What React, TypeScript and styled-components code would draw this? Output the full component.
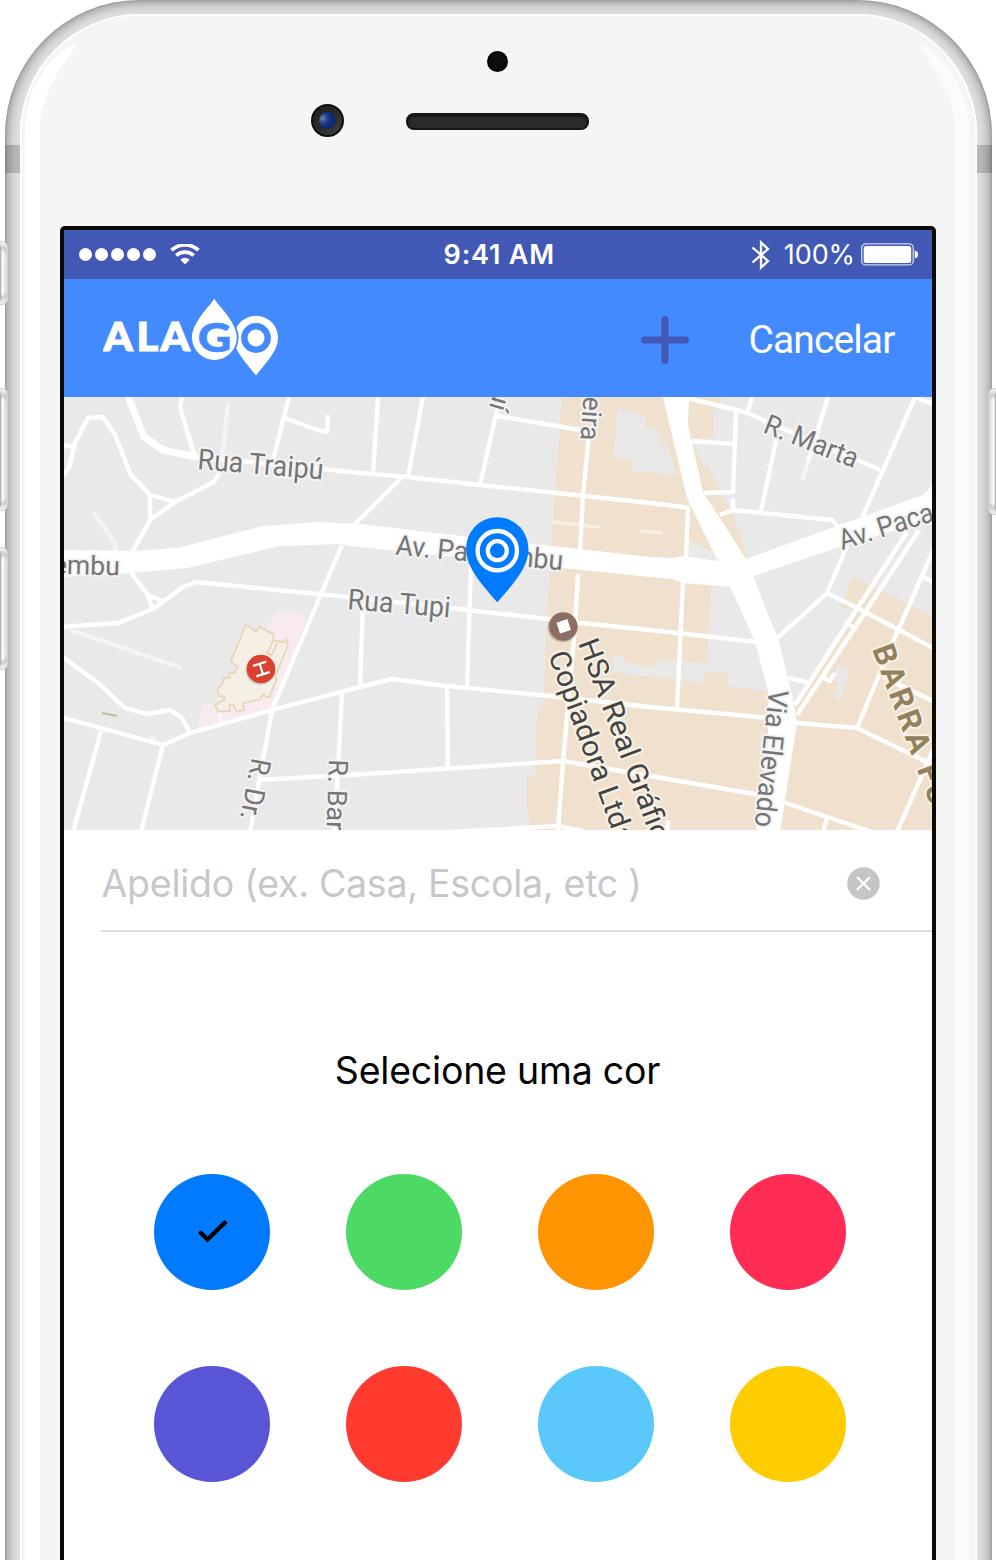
import React from "react";
import styled, { createGlobalStyle } from "styled-components";

const GlobalStyle = createGlobalStyle`
  *, *::before, *::after { box-sizing: border-box; }
  html, body { margin: 0; background: #fff; }
  body { overflow: hidden; }
`;

const SANS = `Inter, "Liberation Sans", sans-serif`;
const ROBOTO = `Roboto, "Liberation Sans", sans-serif`;
const INDIGO = "#4158b5";
const BLUE = "#448aff";

/* ---------- device ---------- */

const Stage = styled.div`
  position: relative;
  width: 996px;
  height: 1560px;
  overflow: hidden;
  background: #fff;
`;

const Shell = styled.div`
  position: relative;
  height: 1660px;
  margin: 0 4px 0 5px;
  padding: 14px 15px 0;
  border-radius: 135px 135px 0 0;
  background: #e0e0e0;
  box-shadow: inset 0 0 14px rgba(0, 0, 0, 0.52), inset 0 0 2px rgba(0, 0, 0, 0.22);
`;

const Face = styled.div`
  position: relative;
  height: 100%;
  padding-top: 37px;
  border-radius: 120px 120px 0 0;
  background: #f4f6f6;
  box-shadow: inset 0 0 0 1.5px #fff;
`;

const Glare = styled.svg`
  position: absolute;
  left: 0;
  top: 0;
  pointer-events: none;
`;

const AntennaBand = styled.div<{ $side: "left" | "right" }>`
  position: absolute;
  top: 145px;
  ${(p) => p.$side}: 0;
  width: 15px;
  height: 28px;
  background: rgba(0, 0, 0, 0.17);
`;

const SideButton = styled.div<{ $side: "left" | "right"; $top: number; $height: number }>`
  position: absolute;
  top: ${(p) => p.$top}px;
  ${(p) => p.$side}: ${(p) => (p.$side === "left" ? -13 : -12)}px;
  width: 16px;
  height: ${(p) => p.$height}px;
  border-radius: 6px;
  border: 1px solid #d2d2d2;
  background: linear-gradient(
    ${(p) => (p.$side === "left" ? "90deg" : "270deg")},
    #999 45%, #a8a8a8 52%, #fdfdfd 64%, #f2f2f2 78%, #cfcfcf 100%
  );
  box-shadow: inset 0 7px 4px -3px #f4f4f4, inset 0 -7px 4px -3px #f4f4f4,
    inset 0 12px 3px -4px rgba(150, 150, 150, 0.5), inset 0 -12px 3px -4px rgba(150, 150, 150, 0.5);
`;

const Sensor = styled.div`
  width: 21px;
  height: 21px;
  margin-left: 467px;
  border-radius: 50%;
  background: #0f0d0d;
  border: 2px solid #000;
`;

const EarpieceRow = styled.div`
  display: flex;
  align-items: center;
  gap: 62px;
  height: 33px;
  margin: 32px 0 0 291px;
`;

const Camera = styled.div`
  display: flex;
  align-items: center;
  justify-content: center;
  width: 33px;
  height: 33px;
  border-radius: 50%;
  border: 2px solid #0d0d0d;
  background: linear-gradient(135deg, #1c1c1c, #2a2a2a 50%, #444);
  &::after {
    content: "";
    width: 17px;
    height: 17px;
    border-radius: 50%;
    background: radial-gradient(circle at 22% 38%, #6d83b5 0, #2b4689 25%, #0b2c86 48%, #16255c 78%, #232a42 100%);
  }
`;

const Speaker = styled.div`
  width: 183px;
  height: 17px;
  margin-top: 2px;
  border-radius: 8px;
  border: 2px solid #141414;
  background: #2b2b2b;
  box-shadow: inset 0 2px 2px #151515;
`;

const Screen = styled.main`
  display: flex;
  flex-direction: column;
  width: 876px;
  height: 1420px;
  margin: 89px 0 0 39.5px;
  border: 4px solid #0b0a04;
  border-radius: 5px;
  background: #fff;
  overflow: hidden;
  position: relative;
`;

/* ---------- bars ---------- */

const StatusBar = styled.div`
  display: grid;
  grid-template-columns: 1fr auto 1fr;
  align-items: center;
  flex: none;
  height: 49px;
  padding: 0 13.5px 0 15px;
  background: ${INDIGO};
  color: #fff;
  font-family: ${SANS};
  font-size: 27px;
  line-height: 48px;
`;

const StatusGroup = styled.div<{ $end?: boolean }>`
  display: flex;
  align-items: center;
  justify-content: ${(p) => (p.$end ? "flex-end" : "flex-start")};
`;

const SignalDots = styled.div`
  display: flex;
  gap: 3.2px;
  margin-right: 13.4px;
`;

const Dot = styled.span`
  width: 13px;
  height: 13px;
  border-radius: 50%;
  background: #fff;
`;

const Clock = styled.span`
  margin-left: 2px;
  font-weight: 600;
  font-size: 27px;
  letter-spacing: 0.8px;
`;

const BatteryText = styled.span`
  margin: 0 6px 0 12.5px;
  font-size: 27px;
  letter-spacing: -0.1px;
`;

const AppBar = styled.header`
  display: flex;
  align-items: center;
  flex: none;
  height: 118px;
  padding: 0 37px 0 39px;
  background: ${BLUE};
`;

const AddButton = styled.button`
  display: flex;
  margin: 4px 60px 0 auto;
  padding: 0;
  border: 0;
  background: none;
`;

const CancelButton = styled.button`
  padding: 4px 0 0;
  border: 0;
  background: none;
  color: #fff;
  font-family: ${ROBOTO};
  font-size: 39px;
  letter-spacing: -0.9px;
  line-height: 46px;
`;

/* ---------- map ---------- */

const MapPane = styled.svg`
  display: block;
  flex: none;
  width: 868px;
  height: 433px;
  background: #e9e9e9;
`;

const Road = styled.path<{ $w?: number; $faint?: boolean }>`
  fill: none;
  stroke: #fff;
  stroke-width: ${(p) => p.$w ?? 4.4};
  stroke-linejoin: round;
  opacity: ${(p) => (p.$faint ? 0.5 : 1)};
`;

const MapLabel = styled.text<{ $tone?: "street" | "place" | "district"; $size?: number }>`
  font-family: ${ROBOTO};
  font-size: ${(p) => p.$size ?? 28}px;
  font-weight: ${(p) => (p.$tone === "district" ? 700 : 400)};
  fill: ${(p) => (p.$tone === "district" ? "#92815a" : p.$tone === "place" ? "#444" : "#757575")};
  stroke: ${(p) => (p.$tone === "district" || p.$tone === "place" ? "#f8f1e6" : "#f3f3f3")};
  stroke-width: 4px;
  stroke-linejoin: round;
  paint-order: stroke;
`;

/* ---------- form ---------- */

const NicknameRow = styled.div`
  display: flex;
  align-items: center;
  justify-content: space-between;
  flex: none;
  height: 102px;
  margin-left: 37px;
  padding: 6px 51.5px 0 1px;
  border-bottom: 2px solid #dcdcdd;
`;

const Placeholder = styled.span`
  padding-top: 2px;
  color: #c7c7cc;
  font-family: ${SANS};
  font-size: 37.5px;
  letter-spacing: -0.27px;
  line-height: 46px;
  white-space: nowrap;
`;

const Title = styled.h1`
  flex: none;
  margin: 115px 0 0;
  color: #030303;
  font-family: ${SANS};
  font-size: 37.5px;
  font-weight: 400;
  letter-spacing: -0.22px;
  line-height: 48px;
  text-align: center;
`;

const Swatches = styled.div`
  display: grid;
  grid-template-columns: repeat(4, 116px);
  gap: 76px;
  margin: 79px 0 0 90px;
`;

const Swatch = styled.button<{ $color: string }>`
  display: flex;
  align-items: center;
  justify-content: center;
  width: 116px;
  height: 116px;
  padding: 0;
  border: 0;
  border-radius: 50%;
  background: ${(p) => p.$color};
`;

const COLORS = ["#007aff", "#4cd964", "#ff9500", "#ff2d55", "#5856d6", "#ff3b30", "#5ac8fa", "#ffcc00"];

const ROADS = [
  "M60 479L69 468L75 443L88 418L103 417L115 435L131 475L150 495L175 502",
  "M64 445L75 447M150 495V519",
  "M131 554L151 519L175 502L214 482L221 470",
  "M182 397L180 407L194 454",
  "M197 457L250 462L323 469L360 473L407 477L480 485L557 493L650 503L690 508",
  "M289 397L273 460M285 418L317 430L327 432L328 415",
  "M131 573L148 595L163 601M148 595L152 608",
  "M60 627L118 623L153 609L183 587L196 582L348 597L393 602L450 608L547 619L580 623L650 630L757 642",
  "M272 710L313 613L342 545M352 527L401 478",
  "M378 397L373 474M423 397L408 477M497 410L480 485M497 416L580 430",
  "M589 435L583 495L580 550M578 574L575 627L563 762L558 830",
  "M471 565L467 687M363 603L360 686M447 687L448 768",
  "M60 655L97 682L125 708L147 714L170 710L182 718L190 733",
  "M60 717L163 745L190 733L272 710L360 687L392 679L447 686L550 696L650 707L770 718L797 723L857 728L935 766",
  "M101 731L73 832M163 745L141 832M272 710L250 832M342 692L337 790L334 832",
  "M258 780L350 775L563 761L650 776L760 795L783 802L827 817L872 832M827 817L823 832",
  "M450 832L558 826L583 831M668 820L667 832",
  "M688 398L748 413L767 422L857 460L880 470M752 397L747 413M736 411L733 492L704 493M733 499V510",
  "M720 515L733 510L832 520L840 529M692 441L733 444M776 440L761 512M828 397L808 462",
  "M862 518L915 397L935 405M847 546L827 593L803 615L776 639M827 593L867 613L935 649",
  "M688 510L686 557M683 582L677 708",
  "M935 546L905 615L895 637L857 728M923 577L935 583M883 677L935 702M933 750L897 832",
  "M788 678L807 682M822 677L830 681L835 673M845 622L856 629",
];

function CityMap() {
  return (
    <MapPane viewBox="64 397 868 433" role="img" aria-label="Mapa">
      {/* commercial areas */}
      <path
        fill="#efe1cd"
        d="M562 397H723L713 413L714 437L692 441L708 465L748 558L730 587H711L707 663L705 672L728 673L727 686L768 691L795 702L858 610L840 608L853 577L935 617V832H529V817L526 810L527 776H535L536 728L539 707L543 703L547 615L553 518Z"
      />
      <path
        fill="#e9e9e9"
        d="M618 409L645 416V428L658 429L661 446L667 445L677 475L633 471V460L613 457ZM690 540L712 552L720 562L688 556ZM711 588L707 663L658 660L657 666L650 667L624 662L623 656H613V672L703 683L705 672L728 673L727 686L768 691L740 588ZM748 558L692 441L714 437L708 430L735 425L780 560ZM760 600L790 700L857 600L833 628L840 608ZM837 663L850 670L840 698L833 697L840 683L835 680ZM923 610H932V615Z"
      />
      <path fill="#efe1cd" d="M700 468L708 465L722 494L733 515L748 558L735 560Z M692 397H723L713 413L714 437L692 440Z" />
      <Road $w={3.5} $faint d="M553 522L600 527M640 531L662 533" />

      {/* hospital grounds */}
      <path fill="#f7ebf0" d="M267 628L277 611L290 610L307 618L272 710L197 730L203 703L213 705Z" />
      <path
        transform="translate(60 610) scale(.3333)"
        fill="#f5efe4"
        stroke="#e6d5b5"
        strokeWidth="5"
        d="M558 45L590 65L598 50L640 72V90L670 97L678 88L685 105L645 200L650 205L628 262L608 255L600 268L548 280L553 300L530 305L520 283L508 287L510 303L475 305L465 285L495 268L490 258H478L472 240L488 220V205L510 203L508 190L522 188L535 170L512 155ZM640 90L622 130L634 136L652 98"
      />

      {/* streets */}
      <Road $faint d="M222 460L228 403M93 512L115 543L116 553M70 630L182 668M808 462L802 480M219 713L221 725M152 736L154 744" />
      <Road $w={7} d="M128 396L144 437L163 450L197 457" />
      {ROADS.map((d) => (
        <Road key={d} d={d} />
      ))}
      <Road $w={4.6} d="M907 532L855 612L795 705M919 530L862 617L797 715" />

      {/* avenues */}
      <path
        fill="#fff"
        d="M60 550L133 551L177 548L263 526L317 522L360 524L470 537L580 549L650 557L672 558L685 556L717 561L740 561L923 495L935 482V518L837 548L748 578L730 587L683 583L672 579L650 577L467 558L350 546L342 544L280 546L187 568L133 573L60 577Z"
      />
      <path
        fill="#fff"
        d="M663 397L687 498L728 582L743 615L755 642L768 690V740L756 832H780L797 723L793 700L778 637L768 615L748 562L703 492L688 425L689 397Z"
      />
      <path d="M102 713L117 716" stroke="#c3bd99" strokeWidth="2" />

      <MapLabel transform="translate(197 469) rotate(4.8)" textLength="126" lengthAdjust="spacingAndGlyphs" $size={29}>Rua Traipú</MapLabel>
      <MapLabel transform="translate(119.5 575.5) rotate(1.5)" textAnchor="end" $size={26.5}>embu</MapLabel>
      <MapLabel transform="translate(395 554.5) rotate(5.4)" textLength="168" lengthAdjust="spacingAndGlyphs">Av. Pacaembu</MapLabel>
      <MapLabel transform="translate(347 609) rotate(4.8)" textLength="103" lengthAdjust="spacingAndGlyphs" $size={29}>Rua Tupi</MapLabel>
      <MapLabel transform="translate(842 550) rotate(-17.5)" textLength="163" lengthAdjust="spacingAndGlyphs">Av. Pacaembu</MapLabel>
      <MapLabel transform="translate(762 432) rotate(21.5)" textLength="99" lengthAdjust="spacingAndGlyphs">R. Marta</MapLabel>
      <MapLabel transform="translate(769 689) rotate(96)" textLength="138" lengthAdjust="spacingAndGlyphs">Via Elevado</MapLabel>
      <MapLabel transform="translate(252 757) rotate(101)" textLength="62" lengthAdjust="spacingAndGlyphs">R. Dr.</MapLabel>
      <MapLabel transform="translate(329 759) rotate(92)" $size={27}>R. Bar</MapLabel>
      <MapLabel transform="translate(580.5 440) rotate(94)" textAnchor="end" $size={27}>eira</MapLabel>
      <MapLabel transform="translate(489 408) rotate(106)" textAnchor="end" $size={27}>uí</MapLabel>
      <MapLabel $tone="place" transform="translate(578 643) rotate(69.5)" textLength="229" lengthAdjust="spacingAndGlyphs" $size={29}>HSA Real Gráfica</MapLabel>
      <MapLabel $tone="place" transform="translate(548 655) rotate(70)" textLength="203" lengthAdjust="spacingAndGlyphs" $size={29}>Copiadora Ltda</MapLabel>
      <MapLabel $tone="district" transform="translate(872 649) rotate(69.5)" letterSpacing="3.2" $size={31}>BARRA FUNDA</MapLabel>

      {/* points of interest */}
      <circle cx="260.5" cy="670" r="15" fill="#000" opacity=".15" />
      <circle cx="261" cy="669" r="14.3" fill="#db4131" />
      <path d="M-5.5 -7V7M5.5 -7V7M-5.5 0H5.5" transform="translate(261.3 669) rotate(72)" stroke="#fff" strokeWidth="2.3" />
      <circle cx="562.6" cy="627.5" r="15" fill="#000" opacity=".18" />
      <circle cx="563.3" cy="626.5" r="14.3" fill="#8d6e63" />
      <rect x="-5.7" y="-5.7" width="11.4" height="11.4" fill="#fff" transform="translate(563.7 626.3) rotate(-18)" />

      {/* selected location */}
      <path fill="#007aff" d="M497.3 517.3C514.5 517.3 528.5 531 528.5 549.5C528.5 567 514 583 497.3 602.3C480.5 583 466.2 567 466.2 549.5C466.2 531 480 517.3 497.3 517.3Z" />
      <circle cx="497.3" cy="550.7" r="19.7" fill="none" stroke="#fff" strokeWidth="4.3" />
      <circle cx="497.3" cy="550.7" r="9.5" fill="none" stroke="#fff" strokeWidth="4.3" />
    </MapPane>
  );
}

const LogoText = styled.text`
  font-family: Lato, ${SANS};
  font-weight: 900;
`;

function Logo() {
  return (
    <svg width="178" height="80" viewBox="103 297.5 178 80" aria-label="ALAGO">
      <LogoText transform="translate(103.5 350.7) scale(1.07 1)" x="0 30.8 53.3" fontSize="39" fill="#fff" stroke="#fff" strokeWidth="1.1">ALA</LogoText>
      <path fill="#fff" d="M256 315.2A22 22 0 0 1 278 337.5C278 351 266.5 361 256 375C245.5 361 234 351 234 337.5A22 22 0 0 1 256 315.2Z" />
      <path
        fill="#fff"
        stroke={BLUE}
        strokeWidth="3.6"
        paintOrder="stroke"
        d="M214.3 298.3C219 306 236.8 322 236.8 337A22.3 22.3 0 0 1 192 337C192 322 209.5 306 214.3 298.3Z"
      />
      <circle cx="256" cy="337.5" r="11.7" fill="none" stroke={BLUE} strokeWidth="6.4" />
      <LogoText transform="translate(214.6 351.2) scale(1.16 1)" fontSize="40" textAnchor="middle" fill={BLUE} stroke={BLUE} strokeWidth=".6">G</LogoText>
    </svg>
  );
}

export default function App() {
  return (
    <Stage>
      <GlobalStyle />
      <Shell>
        <AntennaBand $side="left" />
        <AntennaBand $side="right" />
        <Face>
          <Glare width="957" height="1560" viewBox="20 14 957 1560">
            <path fill="#fff" d="M25.5 1574V130C25.5 92 45 60 73 44.5Q76 43 75 47C66 60 41 93 40 125V1574Z" />
            <path fill="#fcfcfc" d="M969 1574V130C969 92 949 60 922 44.5Q919 43 920 47C929 60 954 93 955 125V1574Z" />
          </Glare>
          <Sensor />
          <EarpieceRow>
            <Camera />
            <Speaker />
          </EarpieceRow>
          <Screen>
            <StatusBar>
              <StatusGroup>
                <SignalDots>
                  {[0, 1, 2, 3, 4].map((i) => (
                    <Dot key={i} />
                  ))}
                </SignalDots>
                <svg width="30" height="22" viewBox="0 0 30 22" fill="none" stroke="#fff" strokeWidth="3.7">
                  <path d="M1.5 6.2C9 -.8 21 -.8 28.5 6.2M6.3 11.5C11 6.9 19 6.9 23.7 11.5" />
                  <path d="M10.4 15.7Q15 11.9 19.6 15.7L15 20.5Z" fill="#fff" stroke="none" />
                </svg>
              </StatusGroup>
              <Clock>9:41 AM</Clock>
              <StatusGroup $end>
                <svg width="20" height="32" viewBox="0 0 20 32" fill="none" stroke="#fff" strokeWidth="2.3">
                  <path d="M1.5 8.5L17 22L10 28.5V3.5L17 10L1.5 23.5" />
                </svg>
                <BatteryText>100%</BatteryText>
                <svg width="57" height="24" viewBox="0 0 57 24">
                  <rect x=".7" y=".9" width="51.5" height="21" rx="4" fill="none" stroke="#fff" strokeOpacity=".75" strokeWidth="1.3" />
                  <rect x="2.7" y="2.9" width="47.5" height="17" rx="2.5" fill="#fff" />
                  <path d="M53.7 7.7H54.5Q57 8.2 57 11.4T54.5 15.2H53.7Z" fill="#fff" />
                </svg>
              </StatusGroup>
            </StatusBar>
            <AppBar>
              <Logo />
              <AddButton aria-label="Adicionar">
                <svg width="48" height="48" viewBox="0 0 48 48" stroke={INDIGO} strokeWidth="7" strokeLinecap="round">
                  <path d="M24 3.5V44.5M3.5 24H44.5" />
                </svg>
              </AddButton>
              <CancelButton>Cancelar</CancelButton>
            </AppBar>
            <CityMap />
            <NicknameRow>
              <Placeholder>Apelido (ex. Casa, Escola, etc )</Placeholder>
              <svg width="33" height="33" viewBox="0 0 33 33">
                <circle cx="16.5" cy="16.5" r="16.3" fill="#c5c5c7" />
                <path d="M10 10L23 23M23 10L10 23" stroke="#fff" strokeWidth="2.3" />
              </svg>
            </NicknameRow>
            <Title>Selecione uma cor</Title>
            <Swatches>
              {COLORS.map((c, i) => (
                <Swatch key={c} $color={c} aria-label={c}>
                  {i === 0 && (
                    <svg width="32" height="26" viewBox="0 0 32 26" fill="none" stroke="#000" strokeWidth="4.4">
                      <path d="M3.5 12.5L11.5 20.5L30 2.5" />
                    </svg>
                  )}
                </Swatch>
              ))}
            </Swatches>
          </Screen>
        </Face>
        <SideButton $side="left" $top={241} $height={64} />
        <SideButton $side="left" $top={388} $height={123} />
        <SideButton $side="left" $top={547} $height={123} />
        <SideButton $side="right" $top={388} $height={127} />
      </Shell>
    </Stage>
  );
}
